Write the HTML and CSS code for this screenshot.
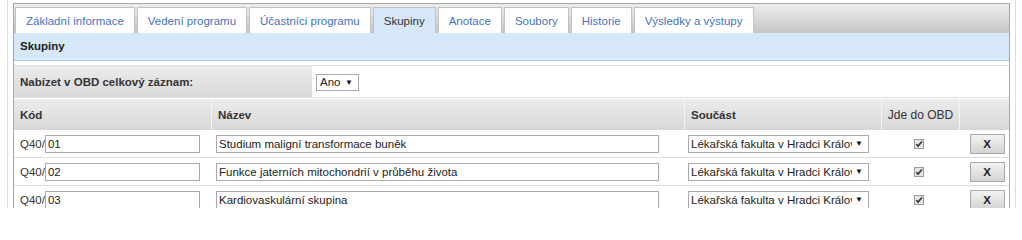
FILE: index.html
```html
<!DOCTYPE html>
<html lang="cs">
<head>
<meta charset="utf-8">
<title>Skupiny</title>
<link rel="stylesheet" href="styles.css">
</head>
<body>
<div class="page">
  <div class="panel">
    <ul class="tabs">
      <li class="tab">Základní informace</li>
      <li class="tab">Vedení programu</li>
      <li class="tab">Účastníci programu</li>
      <li class="tab active">Skupiny</li>
      <li class="tab">Anotace</li>
      <li class="tab">Soubory</li>
      <li class="tab">Historie</li>
      <li class="tab">Výsledky a výstupy</li>
    </ul>
    <div class="section-title">Skupiny</div>
    <div class="option-row">
      <div class="option-label">Nabízet v OBD celkový záznam:</div>
      <div class="option-value">
        <span class="select select-small"><span class="select-text">Ano</span><span class="arrow">▼</span></span>
      </div>
    </div>
    <div class="grid">
      <div class="th">Kód</div>
      <div class="th">Název</div>
      <div class="th">Součást</div>
      <div class="th th-center">Jde do OBD</div>
      <div class="th th-last"></div>

      <div class="td"><span class="prefix">Q40/</span><input class="field field-code" type="text" value="01"></div>
      <div class="td"><input class="field field-name" type="text" value="Studium maligní transformace buněk"></div>
      <div class="td"><span class="select select-wide"><span class="select-text">Lékařská fakulta v Hradci Králové</span><span class="arrow">▼</span></span></div>
      <div class="td td-center"><span class="check"><svg width="10" height="10" viewBox="0 0 10 10"><rect x="0.5" y="0.5" width="9" height="9" fill="#e4e4e4" stroke="#9c9c9c"/><path d="M2.2 5.2 L4.1 7.1 L7.9 2.6" fill="none" stroke="#333" stroke-width="1.6"/></svg></span></div>
      <div class="td td-center"><button class="del" type="button">X</button></div>

      <div class="td"><span class="prefix">Q40/</span><input class="field field-code" type="text" value="02"></div>
      <div class="td"><input class="field field-name" type="text" value="Funkce jaterních mitochondrií v průběhu života"></div>
      <div class="td"><span class="select select-wide"><span class="select-text">Lékařská fakulta v Hradci Králové</span><span class="arrow">▼</span></span></div>
      <div class="td td-center"><span class="check"><svg width="10" height="10" viewBox="0 0 10 10"><rect x="0.5" y="0.5" width="9" height="9" fill="#e4e4e4" stroke="#9c9c9c"/><path d="M2.2 5.2 L4.1 7.1 L7.9 2.6" fill="none" stroke="#333" stroke-width="1.6"/></svg></span></div>
      <div class="td td-center"><button class="del" type="button">X</button></div>

      <div class="td"><span class="prefix">Q40/</span><input class="field field-code" type="text" value="03"></div>
      <div class="td"><input class="field field-name" type="text" value="Kardiovaskulární skupina"></div>
      <div class="td"><span class="select select-wide"><span class="select-text">Lékařská fakulta v Hradci Králové</span><span class="arrow">▼</span></span></div>
      <div class="td td-center"><span class="check"><svg width="10" height="10" viewBox="0 0 10 10"><rect x="0.5" y="0.5" width="9" height="9" fill="#e4e4e4" stroke="#9c9c9c"/><path d="M2.2 5.2 L4.1 7.1 L7.9 2.6" fill="none" stroke="#333" stroke-width="1.6"/></svg></span></div>
      <div class="td td-center"><button class="del" type="button">X</button></div>
    </div>
  </div>
</div>
</body>
</html>
```

FILE: styles.css
```css
html, body {
  margin: 0;
  padding: 0;
  background: #ffffff;
}
body {
  font-family: "Liberation Sans", Arial, sans-serif;
  font-size: 11.5px;
  color: #333333;
}
.page {
  margin-left: 7px;
  width: 997px;
  height: 205px;
  padding: 3px 5px 0 5px;
  border-left: 1px solid #dddddd;
  border-right: 1px solid #dddddd;
  overflow: hidden;
}
.panel {
  border: 1px solid #a6a6a6;
  border-bottom: none;
  height: 220px;
}
.tabs {
  list-style: none;
  margin: 0;
  padding: 3px 0 0 1px;
  display: flex;
  gap: 2px;
  height: 26px;
  background: linear-gradient(#ededed, #c5c5c5);
}
.tab {
  display: flex;
  align-items: center;
  height: 25px;
  padding: 0 10px;
  border: 1px solid #c2c2c2;
  border-bottom: none;
  background: #ffffff;
  color: #4472c4;
  white-space: nowrap;
}
.tab.active {
  background: #d5e7f8;
  color: #333333;
  padding: 0 10px;
}
.section-title {
  height: 27px;
  line-height: 27px;
  padding-left: 6px;
  background: #d5e7f8;
  border-bottom: 1px solid #b5cde5;
  font-weight: bold;
  color: #222222;
}
.option-row {
  display: flex;
  margin-top: 4px;
  height: 31px;
  border-top: 1px solid #e0e0e0;
  border-bottom: 1px solid #e0e0e0;
}
.option-label {
  width: 292px;
  padding-left: 6px;
  display: flex;
  align-items: center;
  font-weight: bold;
  color: #333333;
  background: linear-gradient(#ececec, #d9d9d9);
}
.option-value {
  display: flex;
  align-items: center;
  padding-left: 4px;
}
.select {
  display: inline-flex;
  align-items: center;
  box-sizing: border-box;
  border: 1px solid #a9a9a9;
  background: #ffffff;
  color: #222222;
  overflow: hidden;
}
.select-small {
  width: 43px;
  height: 17px;
  padding-left: 3px;
  margin-top: 1px;
}
.select-wide {
  width: 181px;
  height: 18px;
  padding-left: 2px;
}
.select-text {
  flex: 1;
  min-width: 0;
  overflow: hidden;
  white-space: nowrap;
}
.arrow {
  font-size: 8px;
  padding: 0 5px 0 3px;
  color: #111111;
}
.grid {
  display: grid;
  grid-template-columns: 198px 473px 197px 78px 49px;
  margin-top: 1px;
}
.th {
  height: 31px;
  display: flex;
  align-items: center;
  padding-left: 6px;
  font-weight: bold;
  color: #333333;
  background: linear-gradient(#ececec, #d7d7d7);
  border-right: 1px solid #f4f4f4;
}
.th-center {
  justify-content: center;
  padding-left: 0;
  font-weight: normal;
  font-size: 12px;
}
.th-last {
  border-right: none;
}
.td {
  height: 27px;
  display: flex;
  align-items: center;
  padding-left: 6px;
  border-bottom: 1px solid #dcdcdc;
  white-space: nowrap;
}
.td-center {
  justify-content: center;
  padding-left: 0;
}
.prefix {
  color: #333333;
}
.field {
  box-sizing: border-box;
  height: 18px;
  margin: 0;
  padding: 0 2px;
  border: 1px solid #a9a9a9;
  font-family: "Liberation Sans", Arial, sans-serif;
  font-size: 11.5px;
  color: #222222;
  background: #ffffff;
  outline: none;
}
.field-code {
  width: 155px;
}
.field-name {
  width: 443px;
  margin-left: -2px;
}
.td:nth-child(5n+3) {
  padding-left: 3px;
}
.check {
  display: inline-flex;
  margin-left: -4px;
}
.del {
  box-sizing: border-box;
  width: 35px;
  height: 20px;
  margin: 0 0 0 5px;
  padding: 0;
  border: 1px solid #a8a8a8;
  background: linear-gradient(#f3f3f3, #d3d3d3);
  font-family: "Liberation Sans", Arial, sans-serif;
  font-size: 11.5px;
  font-weight: bold;
  color: #222222;
}
```
